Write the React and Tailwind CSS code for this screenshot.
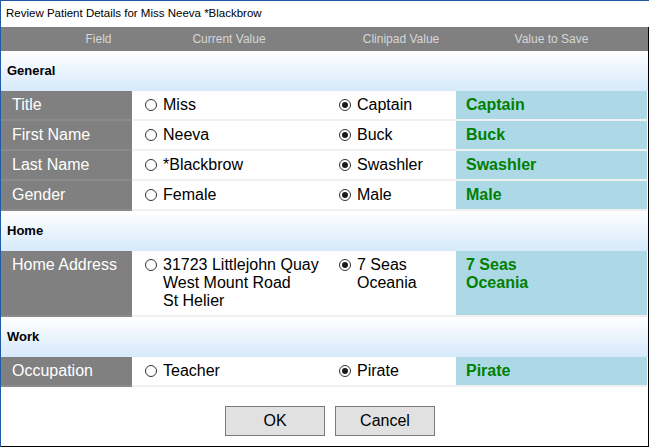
import React from 'react'

const font = { fontFamily: '"Liberation Sans", Arial, sans-serif' }

const sections = [
    {
        name: 'General',
        rows: [
            { field: 'Title', current: ['Miss'], clinipad: ['Captain'] },
            { field: 'First Name', current: ['Neeva'], clinipad: ['Buck'] },
            { field: 'Last Name', current: ['*Blackbrow'], clinipad: ['Swashler'] },
            { field: 'Gender', current: ['Female'], clinipad: ['Male'] },
        ],
    },
    {
        name: 'Home',
        rows: [
            {
                field: 'Home Address',
                current: ['31723 Littlejohn Quay', 'West Mount Road', 'St Helier'],
                clinipad: ['7 Seas', 'Oceania'],
                tall: true,
            },
        ],
    },
    {
        name: 'Work',
        rows: [{ field: 'Occupation', current: ['Teacher'], clinipad: ['Pirate'] }],
    },
]

function Radio({ checked }) {
    return (
        <span className="mt-[3px] flex h-[12px] w-[12px] shrink-0 items-center justify-center rounded-full border border-[#333333] bg-white">
            {checked && <span className="h-[6px] w-[6px] rounded-full bg-[#1a1a1a]" />}
        </span>
    )
}

function Lines({ lines }) {
    return (
        <div>
            {lines.map((l) => (
                <div key={l}>{l}</div>
            ))}
        </div>
    )
}

function Row({ row }) {
    const h = row.tall ? 'h-[66px]' : 'h-[30px]'
    const cell = `${h} border-b-2 pt-[5px]`
    return (
        <div className="grid grid-cols-[131px_194px_130px_191px] text-[16px] leading-[18px]">
            <div className={`${cell} border-[#8a8a8a] bg-[#808080] pl-[11px] text-white`}>{row.field}</div>
            <div className={`${cell} flex gap-[6px] border-[#f0f0f0] bg-white pl-[13px] text-black`}>
                <Radio checked={false} />
                <Lines lines={row.current} />
            </div>
            <div className={`${cell} flex gap-[6px] border-[#f0f0f0] bg-white pl-[13px] text-black`}>
                <Radio checked />
                <Lines lines={row.clinipad} />
            </div>
            <div className={`${cell} border-[#f0f0f0] bg-[#add8e6] pl-[10px] font-bold text-[#008000]`}>
                <Lines lines={row.clinipad} />
            </div>
        </div>
    )
}

export default function App() {
    return (
        <div className="flex h-[447px] w-[649px] flex-col border-l border-t border-[#1f5aa6] bg-white" style={font}>
            <div className="flex h-[26px] items-center pl-[5px] text-[11.5px] text-black">
                Review Patient Details for Miss Neeva *Blackbrow
            </div>
            <div className="flex flex-1 flex-col border-b border-r border-black">
                <div className="grid h-[24px] grid-cols-[131px_194px_130px_191px] items-center bg-[#808080] text-[12px] text-[#d6d6d6]">
                    <div className="pl-[64px] text-center">Field</div>
                    <div className="text-center">Current Value</div>
                    <div className="pl-[20px] text-center">Clinipad Value</div>
                    <div className="text-center">Value to Save</div>
                </div>

                {sections.map((s) => (
                    <div key={s.name}>
                        <div className="flex h-[40px] items-center bg-gradient-to-b from-white to-[#d6e9fb] pl-[6px] text-[13px] font-bold text-black">
                            {s.name}
                        </div>
                        {s.rows.map((r) => (
                            <Row key={r.field} row={r} />
                        ))}
                    </div>
                ))}

                <div className="flex flex-1 gap-[10px] pl-[224px] pt-[19px]">
                    <button className="h-[30px] w-[100px] border border-[#7a7a7a] bg-[#e1e1e1] text-[16px] text-black">OK</button>
                    <button className="h-[30px] w-[100px] border border-[#7a7a7a] bg-[#e1e1e1] text-[16px] text-black">Cancel</button>
                </div>
            </div>
        </div>
    )
}
